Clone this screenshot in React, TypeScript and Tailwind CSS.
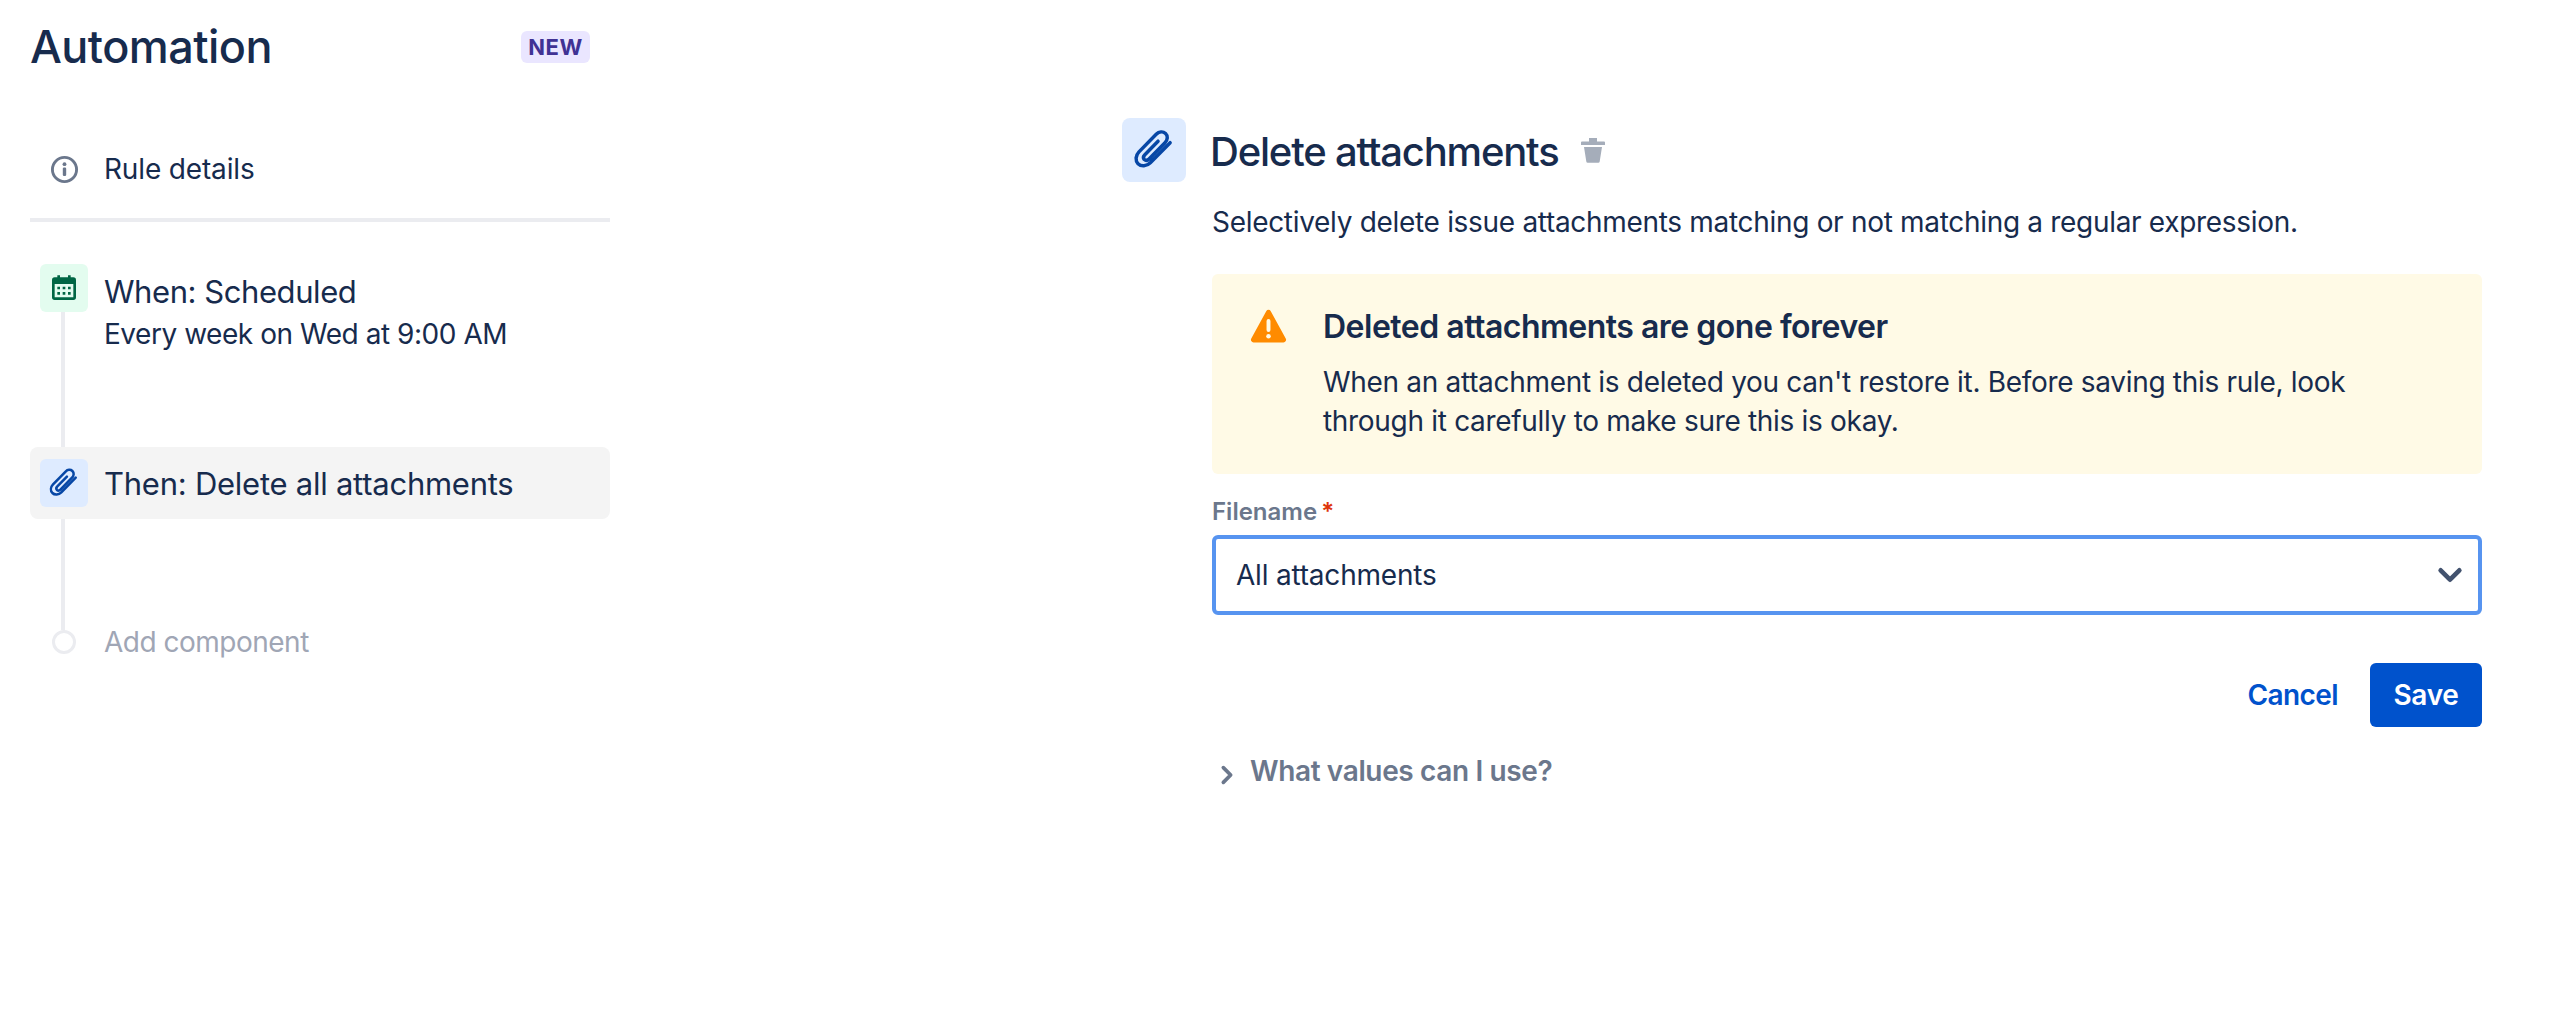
function Clip({ className }: { className: string }) {
  return (
    <svg viewBox="0 0 24 24" className={className} fill="none" stroke="currentColor" strokeWidth="1.9" strokeLinecap="round" strokeLinejoin="round">
      <path d="M20.800 8 10 19c-2 2-5 2.200-6.700.5C1.700 17.800 1.900 15 3.800 13l9.400-9.600c1.500-1.500 3.700-1.700 5.100-.4 1.400 1.300 1.200 3.500-.3 5l-8.700 8.900c-.8.8-1.900.9-2.600.3-.6-.7-.5-1.800.3-2.600l7.200-7.400" />
    </svg>
  )
}

function Chevron({ className }: { className: string }) {
  return (
    <svg viewBox="0 0 24 24" className={className} fill="none" stroke="currentColor" strokeWidth="4" strokeLinecap="round" strokeLinejoin="round">
      <path d="m4 8 8 8 8-8" />
    </svg>
  )
}

export default function App() {
  return (
    <div className="flex h-screen w-full bg-white text-[#172b4d] font-['Inter',sans-serif]">
      <aside className="w-[640px] shrink-0 px-[30px]">
        <div className="flex h-[94px] items-center justify-between pr-5">
          <h1 className="text-[45px] font-medium tracking-[-0.55px]">Automation</h1>
          <span className="flex h-8 w-[69px] items-center justify-center rounded-md bg-[#eae6ff] text-[22px] font-bold tracking-[0.5px] text-[#403294]">NEW</span>
        </div>

        <div className="flex h-[128px] items-center border-b-[4px] border-[#ebecf0] pl-[20px] pt-[26px]">
          <svg viewBox="0 0 24 24" className="h-[29px] w-[29px] text-[#6b778c]" fill="none">
            <circle cx="12" cy="12" r="10" stroke="currentColor" strokeWidth="2.4" />
            <rect x="10.600" y="10.400" width="2.800" height="7" rx="1" fill="currentColor" />
            <circle cx="12" cy="7.600" r="1.600" fill="currentColor" />
          </svg>
          <span className="ml-[25px] text-[28px] tracking-[-0.15px]">Rule details</span>
        </div>

        <div className="relative mt-[42px]">
          <div className="absolute left-[31px] top-[48px] h-[318px] w-1 bg-[#ebecf0]" />

          <div className="relative flex h-[84px] px-[10px]">
            <div className="z-10 flex h-12 w-12 shrink-0 items-center justify-center rounded-md bg-[#e3fcef]">
              <svg viewBox="0 0 24 24" className="h-8 w-8 text-[#006644]">
                <path fill="currentColor" fillRule="evenodd" d="M5 4h2V2.500h2V4h6V2.500h2V4h2a2 2 0 0 1 2 2v13a2 2 0 0 1-2 2H5a2 2 0 0 1-2-2V6a2 2 0 0 1 2-2Zm0 5v10h14V9H5Z" />
                <path fill="currentColor" d="M7 11h2v2H7zm4 0h2v2h-2zm4 0h2v2h-2zM7 15h2v2H7zm4 0h2v2h-2zm4 0h2v2h-2z" />
              </svg>
            </div>
            <div className="ml-4">
              <div className="mt-2 text-[31px] leading-10 tracking-[-0.43px]">When: Scheduled</div>
              <div className="text-[28px] leading-[44px] tracking-[-0.46px]">Every week on Wed at 9:00 AM</div>
            </div>
          </div>

          <div className="relative mt-[99px] flex h-[72px] items-center rounded-lg bg-[#f4f4f4] px-[10px]">
            <div className="z-10 flex h-12 w-12 shrink-0 items-center justify-center rounded-md bg-[#deebff] text-[#0747a6]">
              <Clip className="h-8 w-8" />
            </div>
            <div className="ml-4 pt-[3px] text-[31px] tracking-[-0.25px]">Then: Delete all attachments</div>
          </div>

          <div className="relative mt-[99px] flex h-12 items-center pl-[22px]">
            <div className="z-10 h-6 w-6 rounded-full border-[3px] border-[#ebecf0] bg-white" />
            <div className="ml-7 text-[28px] tracking-[-0.5px] text-[#a0a6b5]">Add component</div>
          </div>
        </div>
      </aside>

      <main className="ml-[482px] w-[1360px] pt-[118px]">
        <div className="flex h-16 items-center">
          <div className="flex h-16 w-16 items-center justify-center rounded-lg bg-[#deebff] text-[#0747a6]">
            <Clip className="h-11 w-11" />
          </div>
          <h2 className="ml-6 pt-[3px] text-[40px] font-medium tracking-[-1.2px]">Delete attachments</h2>
          <svg viewBox="0 0 24 25" className="ml-[22px] h-[25px] w-6 text-[#a5adba]">
            <path fill="currentColor" d="M8 0h8v3.500h7a1 1 0 0 1 1 1V7H0V4.500a1 1 0 0 1 1-1h7V0ZM3 9h18l-2.300 14.500a1.500 1.500 0 0 1-1.500 1.300H6.800a1.500 1.500 0 0 1-1.500-1.300L3 9Z" />
          </svg>
        </div>

        <div className="ml-[90px]">
          <p className="mt-[20px] text-[28px] leading-10 tracking-[-0.31px]">Selectively delete issue attachments matching or not matching a regular expression.</p>

          <div className="mt-[32px] flex h-[200px] rounded-md bg-[#fffae6] py-[32px] pl-[37px] pr-[100px]">
            <svg viewBox="0 0 24 24" className="h-[39px] w-[39px] shrink-0">
              <path fill="#ff8b00" d="M13.400 3.200 22.600 20a1.600 1.600 0 0 1-1.400 2.400H2.800A1.600 1.600 0 0 1 1.400 20l9.200-16.800a1.600 1.600 0 0 1 2.800 0Z" />
              <rect x="10.800" y="8" width="2.400" height="8" rx="1.200" fill="#fffae6" />
              <circle cx="12" cy="18.600" r="1.400" fill="#fffae6" />
            </svg>
            <div className="ml-[35px]">
              <div className="text-[32px] font-semibold leading-[42px] tracking-[-0.5px]">Deleted attachments are gone forever</div>
              <p className="mt-[15px] text-[28px] leading-[39px] tracking-[-0.31px]">When an attachment is deleted you can't restore it. Before saving this rule, look through it carefully to make sure this is okay.</p>
            </div>
          </div>

          <label className="mt-[23px] flex h-[30px] items-center text-[24px] font-semibold text-[#6b778c]">
            Filename<span className="ml-1 text-[#de350b]">*</span>
          </label>
          <div className="mt-2 flex h-20 items-center justify-between rounded-md border-[4px] border-[#5794f0] pl-5 pr-[14px]">
            <span className="text-[28px] tracking-[-0.2px] text-[#172b4d]">All attachments</span>
            <Chevron className="h-7 w-7 text-[#42526e]" />
          </div>

          <div className="mt-[48px] flex items-center justify-end">
            <button className="text-[28px] font-semibold tracking-[-0.6px] text-[#0052cc]">Cancel</button>
            <button className="ml-[32px] flex h-16 w-[112px] items-center justify-center rounded-md bg-[#0052cc] text-[28px] font-semibold tracking-[-0.3px] text-white">Save</button>
          </div>

          <div className="mt-[26px] flex h-9 items-center">
            <svg viewBox="0 0 24 24" className="mt-[8px] ml-1 h-[22px] w-[22px] text-[#6b778c]" fill="none" stroke="currentColor" strokeWidth="4" strokeLinecap="round" strokeLinejoin="round">
              <path d="m8 4 8 8-8 8" />
            </svg>
            <span className="ml-[12px] text-[28px] font-semibold tracking-[-0.37px] text-[#6b778c]">What values can I use?</span>
          </div>
        </div>
      </main>
    </div>
  )
}
